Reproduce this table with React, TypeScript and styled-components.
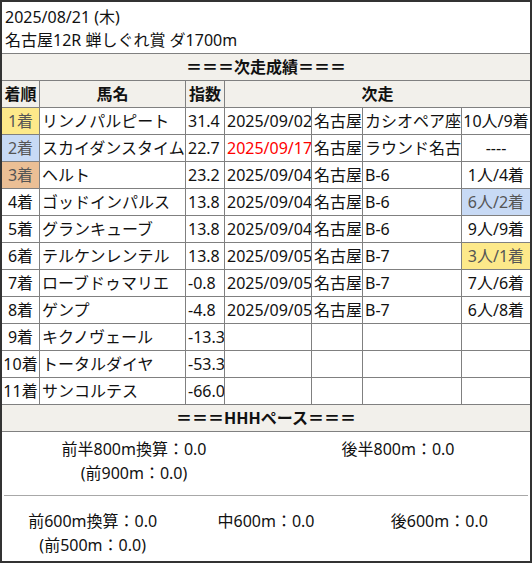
import React from "react";
import styled, { createGlobalStyle } from "styled-components";

const Global = createGlobalStyle`
  html, body { margin: 0; padding: 0; background: #fff; }
  body { font-family: "Noto Sans", "Noto Sans CJK JP", sans-serif; color: #111; }
`;

const Frame = styled.div`
  box-sizing: border-box;
  width: 532px;
  height: 563px;
  border: 2px solid #333;
  background: #fff;
  font-size: 16px;
  overflow: hidden;
`;

const Title = styled.div`
  height: 51px;
  box-sizing: border-box;
  padding: 4px 0 0 3px;
  line-height: 23px;
`;

const Grid = styled.div`
  display: grid;
  grid-template-columns: 37px 145px 38px 86px 50px 98px 1fr;
  grid-auto-rows: 26px;
  gap: 1px;
  padding: 1px 0;
  background: #808080;
`;

type Tone = "gold" | "silver" | "bronze" | undefined;
const toneBg = (t: Tone) =>
  t === "gold" ? "#fde98a" : t === "silver" ? "#c8daf5" : t === "bronze" ? "#ebbf95" : "#fff";

const Cell = styled.div<{ $align?: "left" | "center"; $tone?: Tone; $span?: string; $red?: boolean }>`
  background: ${(p) => toneBg(p.$tone)};
  color: ${(p) => (p.$red ? "#f00" : p.$tone ? "#555" : "#111")};
  grid-column: ${(p) => p.$span ?? "auto"};
  display: flex;
  align-items: center;
  justify-content: ${(p) => (p.$align === "center" ? "center" : "flex-start")};
  padding: 0 2px;
  white-space: nowrap;
  overflow: hidden;
  line-height: 26px;
`;

const HeadCell = styled(Cell)`
  background: #f2f0eb;
  font-weight: bold;
  color: #111;
`;

const SectionHead = styled.div`
  height: 26px;
  line-height: 26px;
  background: #f2f0eb;
  border-bottom: 1px solid #808080;
  text-align: center;
  font-weight: bold;
`;

const PaceRow = styled.div<{ $cols: number; $h: number; $pt: number }>`
  display: grid;
  grid-template-columns: repeat(${(p) => p.$cols}, 1fr);
  height: ${(p) => p.$h}px;
  box-sizing: border-box;
  padding: ${(p) => p.$pt}px ${(p) => (p.$cols === 3 ? 4 : 0)}px 0;
  line-height: 24px;
  text-align: center;
`;

const PaceItem = styled.div`
  display: flex;
  flex-direction: column;
  align-items: center;
  white-space: nowrap;
`;

const Divider = styled.div`
  height: 1px;
  margin: 0 2px;
  background: #a8a8a8;
`;

type Row = {
  rank: string;
  tone?: Tone;
  name: string;
  idx: string;
  date?: string;
  red?: boolean;
  place?: string;
  race?: string;
  result?: string;
  resTone?: Tone;
};

const rows: Row[] = [
  { rank: "1着", tone: "gold", name: "リンノパルピート", idx: "31.4", date: "2025/09/02", place: "名古屋", race: "カシオペア座", result: "10人/9着" },
  { rank: "2着", tone: "silver", name: "スカイダンスタイム", idx: "22.7", date: "2025/09/17", red: true, place: "名古屋", race: "ラウンド名古", result: "----" },
  { rank: "3着", tone: "bronze", name: "ヘルト", idx: "23.2", date: "2025/09/04", place: "名古屋", race: "B-6", result: "1人/4着" },
  { rank: "4着", name: "ゴッドインパルス", idx: "13.8", date: "2025/09/04", place: "名古屋", race: "B-6", result: "6人/2着", resTone: "silver" },
  { rank: "5着", name: "グランキューブ", idx: "13.8", date: "2025/09/04", place: "名古屋", race: "B-6", result: "9人/9着" },
  { rank: "6着", name: "テルケンレンテル", idx: "13.8", date: "2025/09/05", place: "名古屋", race: "B-7", result: "3人/1着", resTone: "gold" },
  { rank: "7着", name: "ローブドゥマリエ", idx: "-0.8", date: "2025/09/05", place: "名古屋", race: "B-7", result: "7人/6着" },
  { rank: "8着", name: "ゲンプ", idx: "-4.8", date: "2025/09/05", place: "名古屋", race: "B-7", result: "6人/8着" },
  { rank: "9着", name: "キクノヴェール", idx: "-13.3" },
  { rank: "10着", name: "トータルダイヤ", idx: "-53.3" },
  { rank: "11着", name: "サンコルテス", idx: "-66.0" },
];

export default function App() {
  return (
    <>
      <Global />
      <Frame>
        <Title>
          <div>2025/08/21 (木)</div>
          <div>名古屋12R 蝉しぐれ賞 ダ1700m</div>
        </Title>
        <Grid>
          <HeadCell $span="1 / -1" $align="center">＝＝＝次走成績＝＝＝</HeadCell>
          <HeadCell $align="center">着順</HeadCell>
          <HeadCell $align="center">馬名</HeadCell>
          <HeadCell $align="center">指数</HeadCell>
          <HeadCell $span="4 / -1" $align="center">次走</HeadCell>
          {rows.map((r) => (
            <React.Fragment key={r.rank}>
              <Cell $align="center" $tone={r.tone}>{r.rank}</Cell>
              <Cell>{r.name}</Cell>
              <Cell>{r.idx}</Cell>
              <Cell $red={r.red}>{r.date ?? ""}</Cell>
              <Cell>{r.place ?? ""}</Cell>
              <Cell>{r.race ?? ""}</Cell>
              <Cell $align="center" $tone={r.resTone}>{r.result ?? ""}</Cell>
            </React.Fragment>
          ))}
        </Grid>
        <SectionHead>＝＝＝HHHペース＝＝＝</SectionHead>
        <PaceRow $cols={2} $h={63} $pt={5}>
          <PaceItem>
            <span>前半800m換算：0.0</span>
            <span>(前900m：0.0)</span>
          </PaceItem>
          <PaceItem>
            <span>後半800m：0.0</span>
          </PaceItem>
        </PaceRow>
        <Divider />
        <PaceRow $cols={3} $h={65} $pt={13}>
          <PaceItem>
            <span>前600m換算：0.0</span>
            <span>(前500m：0.0)</span>
          </PaceItem>
          <PaceItem>
            <span>中600m：0.0</span>
          </PaceItem>
          <PaceItem>
            <span>後600m：0.0</span>
          </PaceItem>
        </PaceRow>
      </Frame>
    </>
  );
}
